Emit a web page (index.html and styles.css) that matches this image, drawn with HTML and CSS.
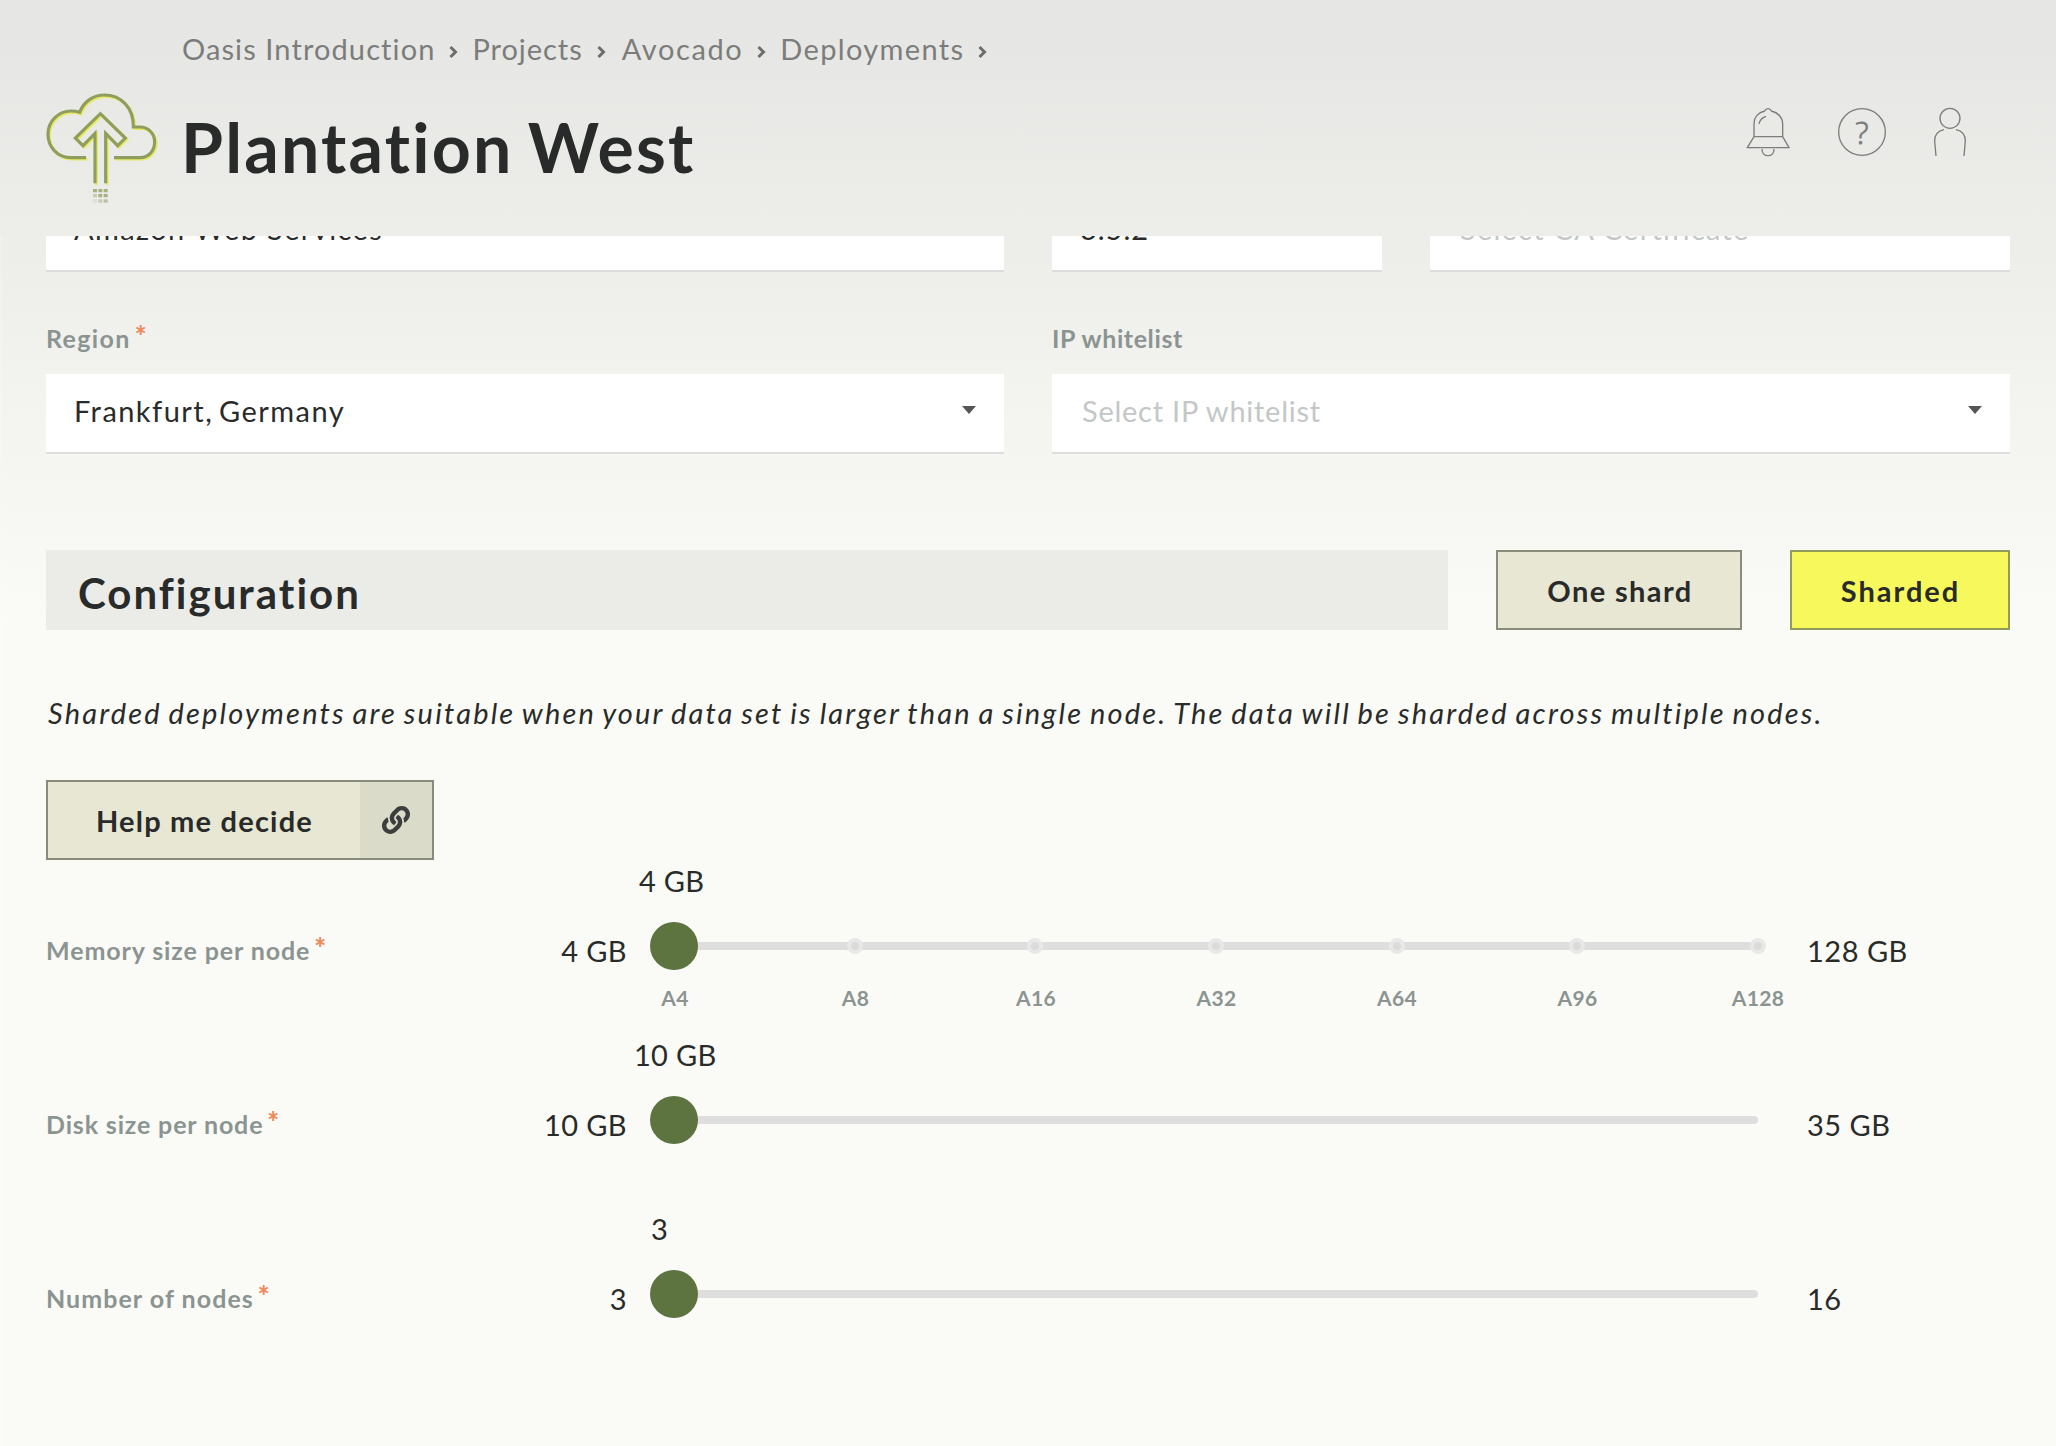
FILE: index.html
```html
<!DOCTYPE html>
<html lang="en">
<head>
<meta charset="utf-8">
<title>Plantation West</title>
<link rel="stylesheet" href="styles.css">
</head>
<body>
<header class="header">
  <svg class="logo" viewBox="0 0 390 378" fill="none" stroke-width="9.5">
    <g stroke="#e9ea62" transform="translate(4 4)">
      <path d="M150 221H105C65 221 36 190 36 151C36 110 68 81 105 81C114 81 122 82 131 85C143 53 172 33 205 33C256 33 293 72 292 129H312C338 129 356 150 356 174C356 200 338 221 312 221H234"/>
      <path d="M177 298V148L141 185L118 162L193 89L268 162L245 185L209 148V298"/>
    </g>
    <g stroke="#8f9e5e">
      <path d="M150 221H105C65 221 36 190 36 151C36 110 68 81 105 81C114 81 122 82 131 85C143 53 172 33 205 33C256 33 293 72 292 129H312C338 129 356 150 356 174C356 200 338 221 312 221H234"/>
      <path d="M177 298V148L141 185L118 162L193 89L268 162L245 185L209 148V298"/>
    </g>
    <g fill="#8f9e5e">
      <path opacity=".75" d="M171 315h12v10h-12zM187 315h12v10h-12zM203 315h12v10h-12zM203 330h12v10h-12zM187 330h12v10h-12z"/>
      <path opacity=".4" d="M171 330h12v10h-12zM187 346h12v10h-12z"/>
      <path opacity=".55" d="M203 346h12v10h-12z"/>
      <path opacity=".15" d="M171 346h12v10h-12z"/>
    </g>
  </svg>
  <div class="heading">
    <nav class="crumbs">
      <a class="crumb c1">Oasis Introduction</a><svg class="chev" viewBox="0 0 9 14"><path d="M1.5 2L6.5 7L1.5 12"/></svg>
      <a class="crumb c2">Projects</a><svg class="chev" viewBox="0 0 9 14"><path d="M1.5 2L6.5 7L1.5 12"/></svg>
      <a class="crumb c3">Avocado</a><svg class="chev" viewBox="0 0 9 14"><path d="M1.5 2L6.5 7L1.5 12"/></svg>
      <a class="crumb c4">Deployments</a><svg class="chev" viewBox="0 0 9 14"><path d="M1.5 2L6.5 7L1.5 12"/></svg>
    </nav>
    <h1 class="title">Plantation West</h1>
  </div>
  <svg class="tools" viewBox="135 75 675 160" fill="none" stroke="#7c7d7b" stroke-width="4">
    <path d="M162 170V130C162 112 175 98 194 93C197 86 200 86 204 86S211 86 214 93C235 98 248 113 248 131V170ZM177 132C179 120 186 113 198 109M162 170L142 203H267L248 170M186 207C186 220 194 227 204 227S222 220 222 207"/>
    <circle cx="486" cy="156" r="70"/>
    <text class="qmark" x="486" y="191" text-anchor="middle">?</text>
    <circle cx="750" cy="115" r="30"/>
    <path d="M708 228L704 183C704 165 713 153 732 149M792 228L796 183C796 165 787 153 768 149"/>
  </svg>
</header>
<main class="main">
  <div class="fields fields-top">
    <div class="field wide provider">Amazon Web Services</div>
    <div class="field version">3.5.2</div>
    <div class="field cert ghost">Select CA Certificate</div>
  </div>
  <div class="fields labels">
    <div class="label"><span class="l-region">Region</span><sup>*</sup></div>
    <div class="label"><span class="l-ip">IP whitelist</span></div>
  </div>
  <div class="fields">
    <div class="field wide region">Frankfurt, Germany<i class="caret"></i></div>
    <div class="field wide ghost whitelist">Select IP whitelist<i class="caret"></i></div>
  </div>
  <div class="config">
    <h2 class="config-title">Configuration</h2>
    <button class="button one">One shard</button>
    <button class="button sharded">Sharded</button>
  </div>
  <p class="note">Sharded deployments are suitable when your data set is larger than a single node. The data will be sharded across multiple nodes.</p>
  <button class="button help"><span class="help-text">Help me decide</span><span class="help-icon"><svg viewBox="0 0 512 512"><path d="M326.612 185.391c59.747 59.809 58.927 155.698.36 214.59-.11.12-.24.25-.36.37l-67.2 67.2c-59.27 59.27-155.699 59.262-214.96 0-59.27-59.26-59.27-155.7 0-214.96l37.106-37.106c9.84-9.84 26.786-3.3 27.294 10.606.648 17.722 3.826 35.527 9.69 52.721 1.986 5.822.567 12.262-3.783 16.612l-13.087 13.087c-28.026 28.026-28.905 73.66-1.155 101.96 28.024 28.579 74.086 28.749 102.325.51l67.2-67.19c28.191-28.191 28.073-73.757 0-101.83-3.701-3.694-7.429-6.564-10.341-8.569a16.037 16.037 0 0 1-6.947-12.606c-.396-10.567 3.348-21.456 11.698-29.806l21.054-21.055c5.521-5.521 14.182-6.199 20.584-1.731a152.482 152.482 0 0 1 20.522 17.197zM467.547 44.449c-59.261-59.262-155.69-59.27-214.96 0l-67.2 67.2c-.12.12-.25.25-.36.37-58.566 58.892-59.387 154.781.36 214.59a152.454 152.454 0 0 0 20.521 17.196c6.402 4.468 15.064 3.789 20.584-1.731l21.054-21.055c8.35-8.35 12.094-19.239 11.698-29.806a16.037 16.037 0 0 0-6.947-12.606c-2.912-2.005-6.64-4.875-10.341-8.569-28.073-28.073-28.191-73.639 0-101.83l67.2-67.19c28.239-28.239 74.3-28.069 102.325.51 27.75 28.3 26.872 73.934-1.155 101.96l-13.087 13.087c-4.35 4.35-5.769 10.79-3.783 16.612 5.864 17.194 9.042 34.999 9.69 52.721.509 13.906 17.454 20.446 27.294 10.606l37.106-37.106c59.271-59.259 59.271-155.699.001-214.959z"/></svg></span></button>
  <section class="row">
    <div class="label"><span class="l-memory">Memory size per node</span><sup>*</sup></div>
    <div class="min">4 GB</div>
    <div class="slider">
      <div class="value v-memory">4 GB</div>
      <div class="rail"><div class="dots"><i></i><i></i><i></i><i></i><i></i><i></i><i></i></div><b class="thumb"></b></div>
      <div class="marks"><span>A4</span><span>A8</span><span>A16</span><span>A32</span><span>A64</span><span>A96</span><span>A128</span></div>
    </div>
    <div class="max">128 GB</div>
  </section>
  <section class="row">
    <div class="label"><span class="l-disk">Disk size per node</span><sup>*</sup></div>
    <div class="min">10 GB</div>
    <div class="slider">
      <div class="value v-disk">10 GB</div>
      <div class="rail"><b class="thumb"></b></div>
    </div>
    <div class="max">35 GB</div>
  </section>
  <section class="row">
    <div class="label"><span class="l-nodes">Number of nodes</span><sup>*</sup></div>
    <div class="min">3</div>
    <div class="slider">
      <div class="value v-nodes">3</div>
      <div class="rail"><b class="thumb"></b></div>
    </div>
    <div class="max">16</div>
  </section>
</main>
</body>
</html>
```
FILE: styles.css
```css
* { box-sizing: border-box; }
body {
  margin: 0;
  width: 2056px;
  height: 1446px;
  overflow: hidden;
  font-family: Lato, "Liberation Sans", sans-serif;
  font-size: 29px;
  font-variant-ligatures: none;
  color: #292b2a;
  background: linear-gradient(#e5e6e3 0, #eeeeeb 270px, #f4f5f1 430px, #fafbf6 620px, #fafbf6 100%);
}

/* Header */
.header { display: flex; height: 236px; padding: 0 46px 0 36px; align-items: flex-start; }
.logo { width: 130px; height: 126px; margin-top: 84px; }
.heading { flex: 1; padding-left: 16px; }
.crumbs { display: flex; height: 100px; align-items: flex-start; color: #7c7d7b; line-height: 40px; padding-top: 29px; }
.c1 { letter-spacing: 1.1px; }
.c2 { letter-spacing: 0.95px; }
.c3 { letter-spacing: 1.6px; margin-left: 2px; }
.c4 { letter-spacing: 1.35px; }
.chev { width: 9px; height: 14px; margin: 16px 14px 0; fill: none; stroke: #6d6e6c; stroke-width: 3; }
.title { margin: 1px 0 0 -1px; font-size: 68px; line-height: 92px; font-weight: 700; letter-spacing: 2.2px; word-spacing: -4px; }
.tools { width: 225px; height: 53.33px; margin: 105px 40px 0 0; }
.qmark { font: 300 95px "Open Sans", "Noto Sans", sans-serif; fill: #7c7d7b; stroke: #7c7d7b; stroke-width: 2.5; }

/* Form fields */
.main { height: 1210px; overflow: hidden; padding: 0 46px; box-shadow: inset 2px 0 rgba(255,255,255,.18); }
.fields { display: flex; gap: 48px; }
.fields-top { margin-top: -44px; }
.field { display: flex; justify-content: space-between; height: 80px; padding: 0 28px; line-height: 73px; background: #fff; border-bottom: 2px solid #dcdddc; }
.wide { width: 958px; }
.provider { letter-spacing: 1.4px; }
.version { width: 330px; letter-spacing: 1px; }
.cert { width: 580px; letter-spacing: 1.25px; }
.region { letter-spacing: 1.45px; word-spacing: -3px; }
.whitelist { letter-spacing: 0.75px; }
.ghost { color: #c3c7c6; padding-left: 30px; }
.caret { width: 14px; height: 8px; margin-top: 32px; background: #555; clip-path: polygon(0 0, 100% 0, 50% 100%); }
.labels { height: 102px; padding-top: 47px; }
.labels .label { width: 958px; }
.label { font-size: 25px; line-height: 38px; font-weight: 700; color: #8b9491; white-space: nowrap; }
.label sup { margin-left: 4px; color: #ee8a5c; font-size: 28px; font-weight: 900; line-height: 0; vertical-align: 2px; }
.l-region { letter-spacing: 1.35px; }
.l-ip { letter-spacing: 0.6px; }
.l-memory { letter-spacing: 0.9px; }
.l-disk { letter-spacing: 0.85px; }
.l-nodes { letter-spacing: 1.05px; }

/* Configuration */
.config { display: flex; gap: 48px; margin-top: 96px; height: 80px; }
.config-title { flex: 1; margin: 0; padding-left: 32px; background: #ebece7; font-size: 42px; line-height: 86px; letter-spacing: 2px; }
.button { height: 80px; padding: 0; border: 2px solid #8a8c7b; background: #e7e7d3; color: inherit; font: 700 29px/78px Lato, sans-serif; }
.one { width: 246px; padding-left: 2px; letter-spacing: 1.4px; }
.sharded { width: 220px; padding-left: 1px; background: #f6f85c; border-color: #8f9a5c; letter-spacing: 2px; }
.note { margin: 63px 0 47px; height: 40px; padding-left: 2px; font-style: italic; line-height: 40px; letter-spacing: 2.17px; word-spacing: -2.2px; white-space: nowrap; }
.help { display: flex; width: 388px; }
.help-text { flex: 1; padding-left: 1px; letter-spacing: 1.2px; }
.help-icon { display: flex; width: 72px; align-items: center; justify-content: center; background: #dadbc9; }
.help-icon svg { width: 28px; height: 28px; fill: #3c3e3d; }

/* Sliders */
.row { display: grid; grid-template-columns: 420px 160px 1084px 1fr; height: 174px; }
.row .label { padding-top: 71px; }
.min, .max { padding-top: 71px; line-height: 40px; letter-spacing: 0.4px; }
.min { margin-right: -1px; text-align: right; }
.max { padding-left: 97px; letter-spacing: 0.5px; }
.slider { margin-left: 48px; margin-right: -48px; }
.value { height: 82px; line-height: 42px; letter-spacing: 0.3px; }
.v-memory { margin-left: -35px; }
.v-disk { margin-left: -40px; }
.v-nodes { margin-left: -23px; }
.rail { position: relative; height: 8px; border-radius: 4px; background: #dddedd; }
.thumb { position: absolute; left: -24px; top: -20px; width: 48px; height: 48px; border-radius: 50%; background: #5d7340; }
.dots, .marks { display: grid; grid-template-columns: repeat(7, 1fr); margin: 0 -90.33px; justify-items: center; }
.dots { position: absolute; left: 0; right: 0; top: -4px; }
.dots i { width: 16px; height: 16px; border: 4px solid #e8e8e7; border-radius: 50%; background: #dadbda; }
.marks { padding: 33px 0 0 1px; font-size: 21px; line-height: 30px; font-weight: 700; letter-spacing: 0.4px; color: #8b9491; }
```
